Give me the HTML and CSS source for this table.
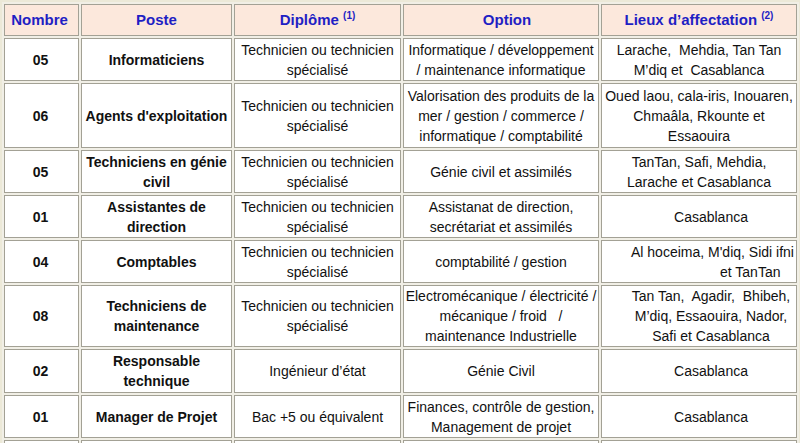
FILE: index.html
```html
<!DOCTYPE html>
<html lang="fr">
<head>
<meta charset="utf-8">
<title>Postes</title>
<link rel="stylesheet" href="styles.css">
</head>
<body>
<table class="grid">
  <colgroup>
    <col class="c1"><col class="c2"><col class="c3"><col class="c4"><col class="c5">
  </colgroup>
  <thead>
    <tr class="head">
      <th class="nb">Nombre</th>
      <th>Poste</th>
      <th>Diplôme <sup>(1)</sup></th>
      <th class="opt">Option</th>
      <th>Lieux d’affectation <sup>(2)</sup></th>
    </tr>
  </thead>
  <tbody>
    <tr class="h2">
      <td class="num">05</td>
      <td class="post">Informaticiens</td>
      <td>Technicien ou technicien<br>spécialisé</td>
      <td>Informatique / développement<br>/ maintenance informatique</td>
      <td>Larache,&nbsp; Mehdia, Tan Tan<br>M’diq et&nbsp; Casablanca</td>
    </tr>
    <tr class="h3a">
      <td class="num">06</td>
      <td class="post">Agents d'exploitation</td>
      <td>Technicien ou technicien<br>spécialisé</td>
      <td>Valorisation des produits de la<br>mer / gestion / commerce /<br>informatique / comptabilité</td>
      <td>Oued laou, cala-iris, Inouaren,<br>Chmaâla, Rkounte et<br>Essaouira</td>
    </tr>
    <tr class="h2">
      <td class="num">05</td>
      <td class="post">Techniciens en génie<br>civil</td>
      <td>Technicien ou technicien<br>spécialisé</td>
      <td>Génie civil et assimilés</td>
      <td>TanTan, Safi, Mehdia,<br>Larache et Casablanca</td>
    </tr>
    <tr class="h2">
      <td class="num">01</td>
      <td class="post">Assistantes de<br>direction</td>
      <td>Technicien ou technicien<br>spécialisé</td>
      <td>Assistanat de direction,<br>secrétariat et assimilés</td>
      <td class="shift">Casablanca</td>
    </tr>
    <tr class="h2">
      <td class="num">04</td>
      <td class="post">Comptables</td>
      <td>Technicien ou technicien<br>spécialisé</td>
      <td>comptabilité / gestion</td>
      <td class="left"><span class="ln1">Al hoceima, M'diq, Sidi ifni</span><span class="ln2">et TanTan</span></td>
    </tr>
    <tr class="h3b">
      <td class="num">08</td>
      <td class="post">Techniciens de<br>maintenance</td>
      <td>Technicien ou technicien<br>spécialisé</td>
      <td>Electromécanique / électricité /<br>mécanique / froid &nbsp; /<br>maintenance Industrielle</td>
      <td class="shift">Tan Tan,&nbsp; Agadir,&nbsp; Bhibeh,<br>M’diq, Essaouira, Nador,<br>Safi et Casablanca</td>
    </tr>
    <tr class="h2b">
      <td class="num">02</td>
      <td class="post">Responsable<br>technique</td>
      <td>Ingénieur d’état</td>
      <td>Génie Civil</td>
      <td class="shift">Casablanca</td>
    </tr>
    <tr class="h2">
      <td class="num">01</td>
      <td class="post">Manager de Projet</td>
      <td>Bac +5 ou équivalent</td>
      <td>Finances, contrôle de gestion,<br>Management de projet</td>
      <td class="shift">Casablanca</td>
    </tr>
    <tr class="h2">
      <td class="num">&nbsp;</td>
      <td class="post">&nbsp;</td>
      <td>&nbsp;</td>
      <td>&nbsp;</td>
      <td>&nbsp;</td>
    </tr>
  </tbody>
</table>
</body>
</html>
```

FILE: styles.css
```css
html, body {
  margin: 0;
  padding: 0;
  background: #ece9d8;
}

body {
  padding: 2px;
  font-family: "Liberation Sans", Arial, sans-serif;
  color: #111;
  overflow: hidden;
}

.grid {
  table-layout: fixed;
  width: 797px;
  border-collapse: separate;
  border-spacing: 2px;
  background: #f1efe6;
}

.c1 { width: 75px; }
.c2 { width: 151px; }
.c3 { width: 167px; }
.c4 { width: 196px; }
.c5 { width: 196px; }

.grid th,
.grid td {
  border: 1px solid #a3a195;
  padding: 0;
  text-align: center;
  vertical-align: middle;
  font-size: 14px;
  line-height: 20px;
  background: #fff;
}

.grid th {
  background: #fce8dc;
  color: #1f1fc4;
  font-size: 15px;
  font-weight: bold;
  height: 30px;
}

.grid th.opt {
  padding-left: 12px;
}

.grid th.nb {
  padding-right: 4px;
}

.grid sup {
  font-size: 10px;
  line-height: 0;
  vertical-align: 6px;
}

.head { height: 32px; }
.h2 { height: 43px; }
.h2b { height: 44px; }
.h3a { height: 65px; }
.h3b { height: 62px; }

.grid td.num,
.grid td.post {
  font-weight: bold;
}

.grid td.num { padding-right: 2px; }

.grid td.shift {
  padding-left: 24px;
}

.grid td.left {
  text-align: left;
}

.ln1,
.ln2 {
  display: block;
}

.ln1 { padding-left: 29px; }
.ln2 { padding-left: 118px; }
```
